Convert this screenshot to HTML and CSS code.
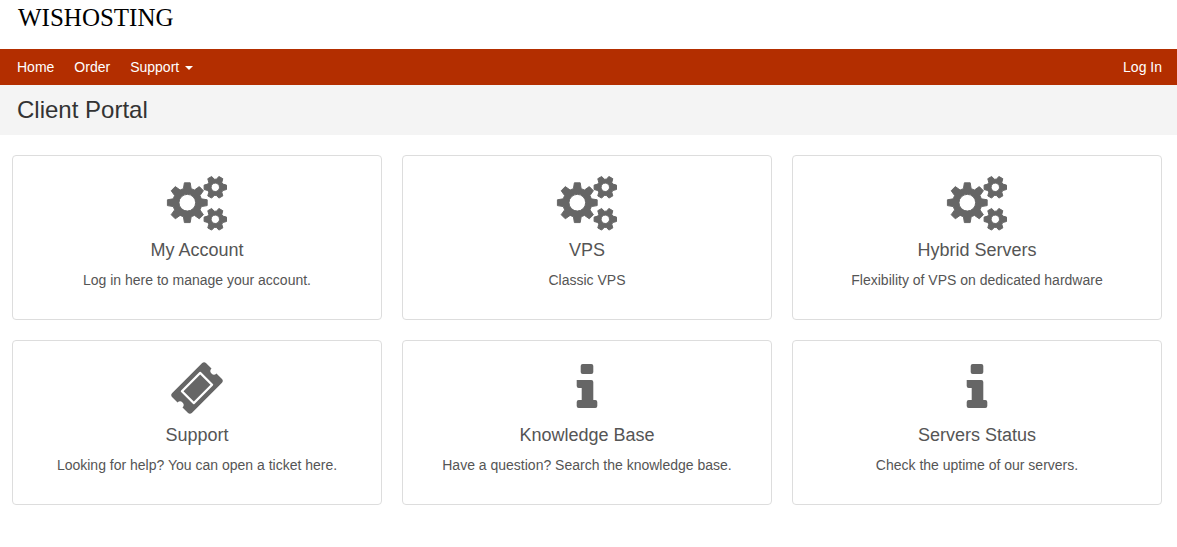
FILE: index.html
```html
<!DOCTYPE html>
<html lang="en">
<head>
    <meta charset="UTF-8">
    <meta name="viewport" content="width=device-width, initial-scale=1.0">
    <title>Client Portal</title>
    <link rel="stylesheet" href="styles.css">
</head>
<body>
    <svg class="icon-defs" aria-hidden="true">
        <defs>
            <g id="cogs" class="cogs">
                <path transform="translate(25.3 30.7) scale(.97)" d="M-4 -14.5L-3 -20.5H3L4 -14.5L7.42 -13.08L12.37 -16.62L16.62 -12.37L13.08 -7.42L14.5 -4L20.5 -3V3L14.5 4L13.08 7.42L16.62 12.37L12.37 16.62L7.42 13.08L4 14.5L3 20.5H-3L-4 14.5L-7.42 13.08L-12.37 16.62L-16.62 12.37L-13.08 7.42L-14.5 4L-20.5 3V-3L-14.5 -4L-13.08 -7.42L-16.62 -12.37L-12.37 -16.62L-7.42 -13.08ZM-8.6 0A8.6 8.6 0 0 0 8.6 0A8.6 8.6 0 0 0 -8.6 0Z"/>
                <path transform="translate(53.3 15.3)" d="M7.5 -3.2L11.2 -2.2V2.2L7.5 3.2L6.52 4.9L7.51 8.6L3.69 10.8L.98 8.1H-.98L-3.69 10.8L-7.51 8.6L-6.52 4.9L-7.5 3.2L-11.2 2.2V-2.2L-7.5 -3.2L-6.52 -4.9L-7.51 -8.6L-3.69 -10.8L-.98 -8.1H.98L3.69 -10.8L7.51 -8.6L6.52 -4.9ZM-4.2 0A4.2 4.2 0 0 0 4.2 0A4.2 4.2 0 0 0 -4.2 0Z"/>
                <path transform="translate(53.3 47.3)" d="M7.5 -3.2L11.2 -2.2V2.2L7.5 3.2L6.52 4.9L7.51 8.6L3.69 10.8L.98 8.1H-.98L-3.69 10.8L-7.51 8.6L-6.52 4.9L-7.5 3.2L-11.2 2.2V-2.2L-7.5 -3.2L-6.52 -4.9L-7.51 -8.6L-3.69 -10.8L-.98 -8.1H.98L3.69 -10.8L7.51 -8.6L6.52 -4.9ZM-4.2 0A4.2 4.2 0 0 0 4.2 0A4.2 4.2 0 0 0 -4.2 0Z"/>
            </g>
            <path id="ticket" transform="translate(35 31) rotate(-45)" fill-rule="evenodd" d="M-21 -14H21A3 3 0 0 1 24 -11V-3.5A3.5 3.5 0 0 0 24 3.5V11A3 3 0 0 1 21 14H-21A3 3 0 0 1 -24 11V3.5A3.5 3.5 0 0 0 -24 -3.5V-11A3 3 0 0 1 -21 -14ZM-13 -9.5A1 1 0 0 0 -14 -8.5V8.5A1 1 0 0 0 -13 9.5H13A1 1 0 0 0 14 8.5V-8.5A1 1 0 0 0 13 -9.5ZM-11.8 -7.3H11.8V7.3H-11.8Z"/>
            <g id="info">
                <rect x="28.7" y="7" width="12.6" height="10" rx="2"/>
                <path d="M24.7 23H39.3A2 2 0 0 1 41.3 25V43H43.3A2 2 0 0 1 45.3 45V49A2 2 0 0 1 43.3 51H26.7A2 2 0 0 1 24.7 49V45A2 2 0 0 1 26.7 43H29.7V31H26.7A2 2 0 0 1 24.7 29Z"/>
            </g>
        </defs>
    </svg>

    <header class="site-header">
        <a class="logo" href="#">WISHOSTING</a>
    </header>

    <nav class="navbar">
        <ul class="nav-links">
            <li><a href="#">Home</a></li>
            <li><a href="#">Order</a></li>
            <li><a href="#">Support <span class="caret"></span></a></li>
        </ul>
        <a href="#">Log In</a>
    </nav>

    <div class="page-title">
        <h1>Client Portal</h1>
    </div>

    <main class="cards">
        <a class="card" href="#">
            <svg class="card-icon" viewBox="0 0 70 60"><use href="#cogs"/></svg>
            <h2>My Account</h2>
            <p>Log in here to manage your account.</p>
        </a>
        <a class="card" href="#">
            <svg class="card-icon" viewBox="0 0 70 60"><use href="#cogs"/></svg>
            <h2>VPS</h2>
            <p>Classic VPS</p>
        </a>
        <a class="card" href="#">
            <svg class="card-icon" viewBox="0 0 70 60"><use href="#cogs"/></svg>
            <h2>Hybrid Servers</h2>
            <p>Flexibility of VPS on dedicated hardware</p>
        </a>
        <a class="card" href="#">
            <svg class="card-icon" viewBox="0 0 70 60"><use href="#ticket"/></svg>
            <h2>Support</h2>
            <p>Looking for help? You can open a ticket here.</p>
        </a>
        <a class="card" href="#">
            <svg class="card-icon" viewBox="0 0 70 60"><use href="#info"/></svg>
            <h2>Knowledge Base</h2>
            <p>Have a question? Search the knowledge base.</p>
        </a>
        <a class="card" href="#">
            <svg class="card-icon" viewBox="0 0 70 60"><use href="#info"/></svg>
            <h2>Servers Status</h2>
            <p>Check the uptime of our servers.</p>
        </a>
    </main>
</body>
</html>
```

FILE: styles.css
```css
body {
    font-family: 'Liberation Sans', Arial, sans-serif;
    font-size: 14px;
    line-height: 20px;
    color: #555;
    background-color: #fff;
    margin: 0;
    padding: 0;
}
a {
    text-decoration: none;
    color: inherit;
}
.icon-defs {
    position: absolute;
    width: 0;
    height: 0;
}
.site-header {
    height: 49px;
    padding-left: 18px;
}
.logo {
    display: block;
    padding-top: 4px;
    font-family: 'Liberation Serif', 'Times New Roman', serif;
    font-size: 25px;
    line-height: 28px;
    color: #000;
}
.navbar {
    display: flex;
    justify-content: space-between;
    align-items: center;
    height: 36px;
    padding: 0 15px 0 17px;
    background-color: #b32e00;
    color: #fff;
}
.nav-links {
    display: flex;
    gap: 20px;
    list-style: none;
    margin: 0;
    padding: 0;
}
.caret {
    display: inline-block;
    margin-left: 2px;
    vertical-align: middle;
    border-top: 4px solid #fff;
    border-left: 4px solid transparent;
    border-right: 4px solid transparent;
}
.page-title {
    height: 50px;
    padding-left: 17px;
    background-color: #f4f4f4;
}
.page-title h1 {
    margin: 0;
    font-size: 24px;
    font-weight: 400;
    line-height: 50px;
    color: #333;
}
.cards {
    display: grid;
    grid-template-columns: repeat(3, 370px);
    gap: 20px;
    padding: 20px 0 0 12px;
}
.card {
    box-sizing: border-box;
    height: 165px;
    padding: 16px;
    border: 1px solid #ddd;
    border-radius: 4px;
    text-align: center;
}
.card-icon {
    display: block;
    width: 70px;
    height: 60px;
    margin: 0 auto;
    fill: #666;
}
.cogs {
    fill-rule: evenodd;
    stroke: #666;
    stroke-width: 1;
    stroke-linejoin: round;
}
.card h2 {
    margin: 8px 0 0;
    font-size: 18px;
    font-weight: 400;
    line-height: 20px;
}
.card p {
    margin: 10px 0 0;
}
```
